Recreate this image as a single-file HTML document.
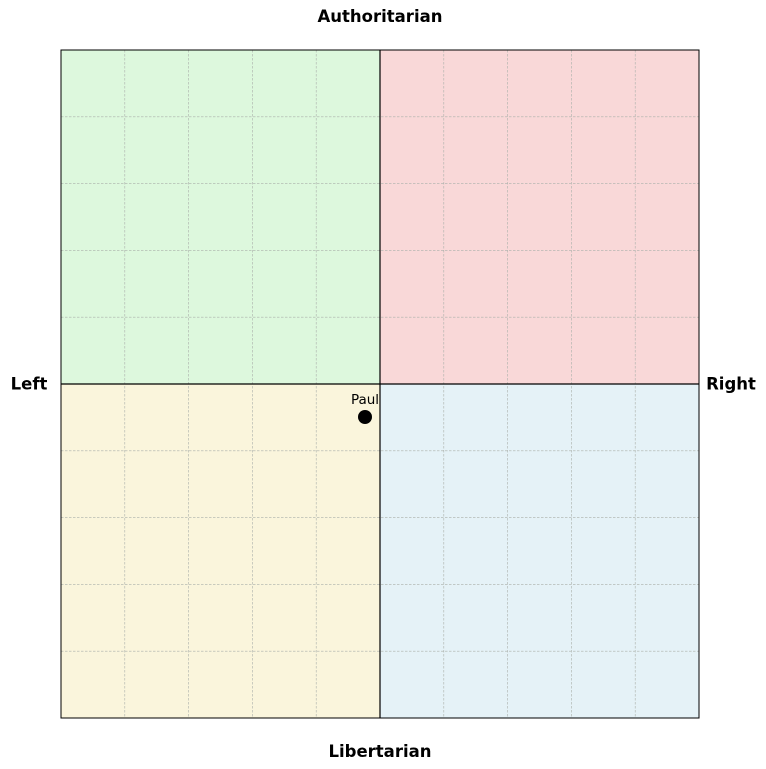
<!DOCTYPE html>
<html><head><meta charset="utf-8"><style>html,body{margin:0;padding:0;background:#fff;}svg{display:block;}</style></head>
<body>
<svg width="766" height="769" viewBox="0 0 766 769" xmlns="http://www.w3.org/2000/svg" font-family="DejaVu Sans, Liberation Sans, sans-serif">
<rect x="61" y="50" width="319" height="334" fill="#ddf8dd"/>
<rect x="380" y="50" width="319" height="334" fill="#f9d8d8"/>
<rect x="61" y="384" width="319" height="334" fill="#faf5dc"/>
<rect x="380" y="384" width="319" height="334" fill="#e5f2f7"/>
<g stroke="#aab0aa" stroke-width="0.6" stroke-dasharray="2.5,1.5">
<line x1="124.8" y1="50" x2="124.8" y2="718"/><line x1="188.6" y1="50" x2="188.6" y2="718"/><line x1="252.4" y1="50" x2="252.4" y2="718"/><line x1="316.2" y1="50" x2="316.2" y2="718"/>
<line x1="443.8" y1="50" x2="443.8" y2="718"/><line x1="507.6" y1="50" x2="507.6" y2="718"/><line x1="571.4" y1="50" x2="571.4" y2="718"/><line x1="635.2" y1="50" x2="635.2" y2="718"/>
<line x1="61" y1="116.8" x2="699" y2="116.8"/><line x1="61" y1="183.6" x2="699" y2="183.6"/><line x1="61" y1="250.4" x2="699" y2="250.4"/><line x1="61" y1="317.2" x2="699" y2="317.2"/>
<line x1="61" y1="450.8" x2="699" y2="450.8"/><line x1="61" y1="517.6" x2="699" y2="517.6"/><line x1="61" y1="584.4" x2="699" y2="584.4"/><line x1="61" y1="651.2" x2="699" y2="651.2"/>
</g>
<line x1="380" y1="50" x2="380" y2="718" stroke="#000" stroke-width="1.2"/>
<line x1="61" y1="384" x2="699" y2="384" stroke="#000" stroke-width="1.2"/>
<rect x="61" y="50" width="638" height="668" fill="none" stroke="#000" stroke-width="1"/>
<circle cx="365" cy="417" r="7" fill="#000"/>
<text x="365" y="404" font-size="13.5" text-anchor="middle">Paul</text>
<g font-weight="bold" font-size="16.5">
<text x="380" y="22" text-anchor="middle">Authoritarian</text>
<text x="380" y="757" text-anchor="middle">Libertarian</text>
<text x="29" y="389.5" text-anchor="middle">Left</text>
<text x="731" y="389.5" text-anchor="middle">Right</text>
</g>
</svg>
</body></html>
